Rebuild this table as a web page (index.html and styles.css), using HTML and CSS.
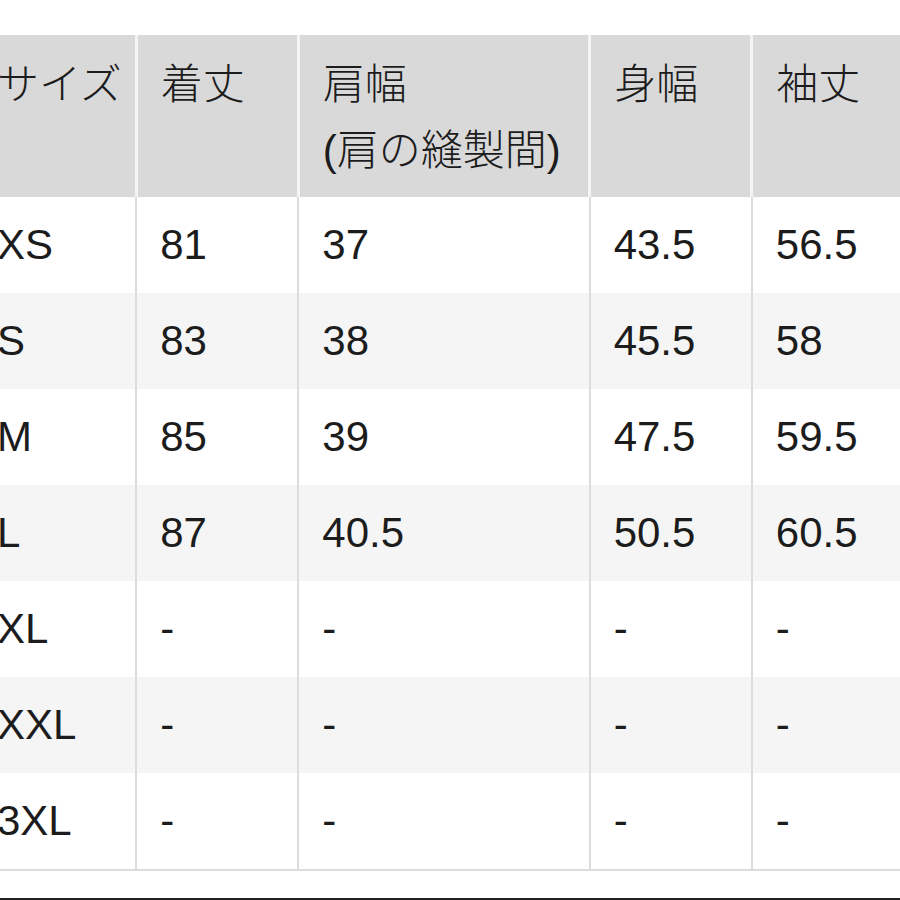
FILE: index.html
```html
<!DOCTYPE html>
<html lang="ja">
<head>
<meta charset="utf-8">
<title>サイズ表</title>
<link rel="stylesheet" href="styles.css">
</head>
<body>
<div class="page">
  <table class="size-table">
    <colgroup>
      <col class="c-size">
      <col class="c-narrow">
      <col class="c-wide">
      <col class="c-narrow">
      <col class="c-narrow">
    </colgroup>
    <thead>
      <tr>
        <th>サイズ</th>
        <th>着丈</th>
        <th>肩幅<br>(肩の縫製間)</th>
        <th>身幅</th>
        <th>袖丈</th>
      </tr>
    </thead>
    <tbody>
      <tr><td>XS</td><td>81</td><td>37</td><td>43.5</td><td>56.5</td></tr>
      <tr><td>S</td><td>83</td><td>38</td><td>45.5</td><td>58</td></tr>
      <tr><td>M</td><td>85</td><td>39</td><td>47.5</td><td>59.5</td></tr>
      <tr><td>L</td><td>87</td><td>40.5</td><td>50.5</td><td>60.5</td></tr>
      <tr><td>XL</td><td>-</td><td>-</td><td>-</td><td>-</td></tr>
      <tr><td>XXL</td><td>-</td><td>-</td><td>-</td><td>-</td></tr>
      <tr><td>3XL</td><td>-</td><td>-</td><td>-</td><td>-</td></tr>
    </tbody>
  </table>
  <div class="bottom-rule"></div>
</div>
</body>
</html>
```

FILE: styles.css
```css
html, body {
  margin: 0;
  padding: 0;
  background: #ffffff;
}

body {
  font-family: "Liberation Sans", "Noto Sans CJK JP", sans-serif;
  color: #1c1c1c;
  overflow: hidden;
}

.page {
  width: 900px;
  height: 900px;
  overflow: hidden;
  padding-top: 35px;
  box-sizing: border-box;
}

.size-table {
  margin-left: -26px;
  width: 940px;
  table-layout: fixed;
  border-collapse: collapse;
  font-size: 42px;
  font-weight: 300;
}

.c-size { width: 162px; }
.c-narrow { width: 162px; }
.c-wide { width: 291px; }

.size-table th {
  background: #d9d9d9;
  font-weight: 300;
  text-align: left;
  vertical-align: top;
  line-height: 66px;
  padding: 17px 10px 13px 23px;
  height: 132px;
  border-left: 3px solid #f4f4f4;
}

.size-table td {
  text-align: left;
  vertical-align: middle;
  line-height: 66px;
  height: 66px;
  padding: 15px 10px 15px 23px;
  border-left: 2px solid #dcdcdc;
}

.size-table th:first-child,
.size-table td:first-child {
  border-left: none;
}

.size-table tbody tr:nth-child(even) td {
  background: #f5f5f5;
}

.size-table tbody tr:last-child td {
  border-bottom: 2px solid #dcdcdc;
}

.bottom-rule {
  margin-top: 27px;
  border-top: 3px solid #222222;
}
```
